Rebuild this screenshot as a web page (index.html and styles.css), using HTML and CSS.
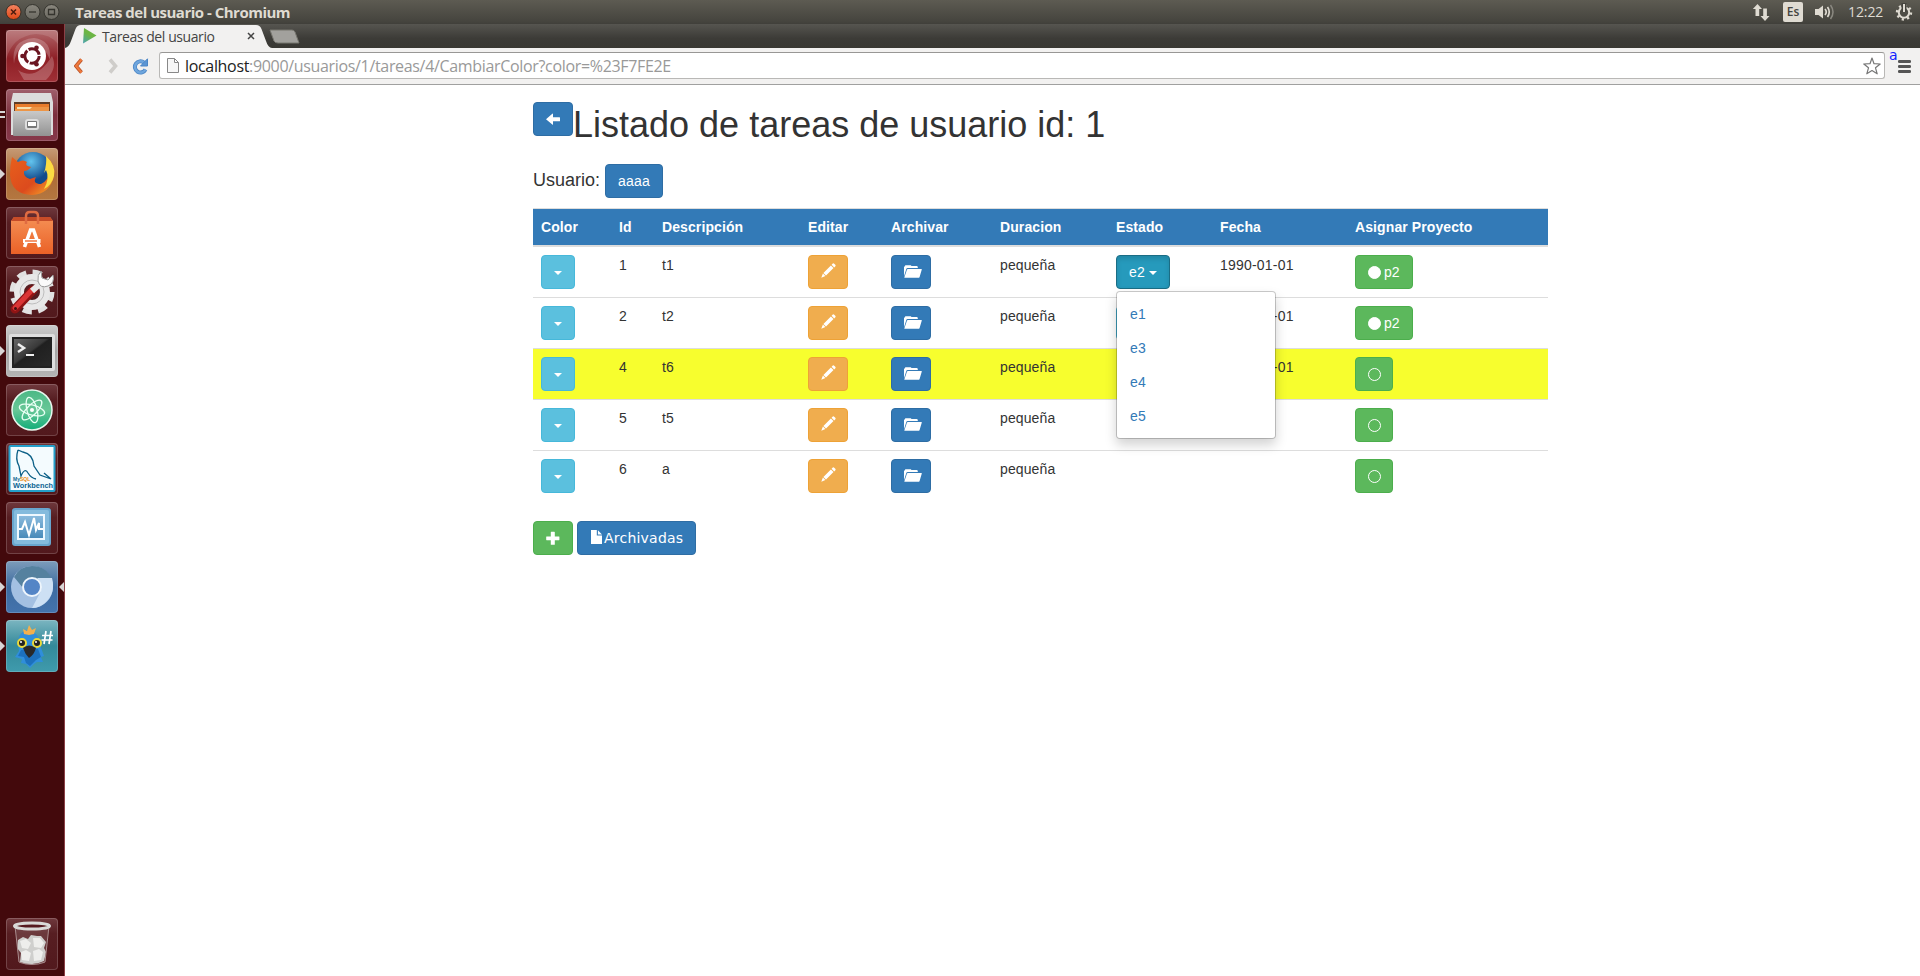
FILE: index.html
```
<!DOCTYPE html>
<html lang="es">
<head>
<meta charset="utf-8">
<title>Tareas del usuario</title>
<link rel="stylesheet" href="styles.css">
</head>
<body>
<svg width="0" height="0" class="defs" aria-hidden="true">
  <defs>
    <symbol id="pencil" viewBox="0 0 15 15"><path fill="#fff" d="M10.6 1.8 L13.2 4.4 L14.4 3.2 Q15 2.5 14.3 1.8 L13.2 .7 Q12.4 0 11.8 .6Z M9.9 2.5 L12.5 5.1 L5 12.6 L2.4 10Z M1.9 10.6 L4.4 13.1 L.3 14.7Z"/></symbol>
    <symbol id="folder" viewBox="0 0 18 13"><path fill="#fff" d="M0 11.2 V2 L1 1 V.7 Q1 .2 1.6 .2 H6.6 Q7.2 .2 7.4 1 H12.6 Q13.8 1 13.8 2.2 V3 H3.6 Q2.7 3 2.4 3.8Z M3.8 3.9 H17.4 Q18 3.9 17.8 4.6 L15.6 11.9 Q15.2 12.8 14.4 12.8 H.7 Q.2 12.8 .4 12.2 L3 4.6 Q3.2 3.9 3.8 3.9Z"/></symbol>
  </defs>
</svg>

<header class="panel">
  <div class="winbtns">
    <svg width="62" height="18" viewBox="0 0 62 18">
      <defs><linearGradient id="wc" x2="0" y2="1"><stop stop-color="#f58461"/><stop offset="1" stop-color="#dd4715"/></linearGradient><linearGradient id="wg" x2="0" y2="1"><stop stop-color="#8a877e"/><stop offset="1" stop-color="#6b6961"/></linearGradient></defs>
      <circle cx="8.5" cy="9" r="7.5" fill="url(#wc)" stroke="#3a3027"/><path d="M6 6.500 L11 11.500 M11 6.500 L6 11.500" stroke="#4b1c0e" stroke-width="1.500"/>
      <circle cx="27.500" cy="9" r="7.500" fill="url(#wg)" stroke="#35342e"/><path d="M24 9 H31" stroke="#35342e" stroke-width="1.300"/>
      <circle cx="46.500" cy="9" r="7.500" fill="url(#wg)" stroke="#35342e"/><path d="M43.500 6.500 H49.500 V11.500 H43.500Z" fill="none" stroke="#35342e" stroke-width="1.300"/>
    </svg>
  </div>
  <div class="wintitle">Tareas del usuario - Chromium</div>
  <div class="tray">
    <svg class="net" width="18" height="17" viewBox="0 0 18 17"><path fill="#dfdbd2" d="M5.500 0 L10 5 H7.200 V12 H3.500 V5 H.8Z M13 17 L8.500 12 H11.200 V4.500 H14.900 V12 H17.500Z"/></svg>
    <span class="kbd">Es</span>
    <svg class="vol" width="20" height="16" viewBox="0 0 20 16"><path fill="#dfdbd2" d="M0 5 H3.500 L8 1.500 V14.500 L3.500 11 H0Z"/><path d="M10 5 Q12.500 8 10 11 M12.500 3 Q16 8 12.500 13" fill="none" stroke="#dfdbd2" stroke-width="1.700"/><path d="M15.500 1 Q20.500 8 15.500 15" fill="none" stroke="#8a8880" stroke-width="1.500"/></svg>
    <span class="clock">12:22</span>
    <svg class="gear" width="18" height="18" viewBox="0 0 18 18"><circle cx="9" cy="9.500" r="7" fill="none" stroke="#dfdbd2" stroke-width="2.400" stroke-dasharray="2.200 3.300"/><circle cx="9" cy="9.500" r="5.200" fill="none" stroke="#dfdbd2" stroke-width="2"/><path d="M9 0 V9" stroke="#45443e" stroke-width="5"/><path d="M9 1 V9" stroke="#dfdbd2" stroke-width="2"/></svg>
  </div>
</header>

<div class="desktop">
  <nav class="launcher">
    <div class="tile dash"><svg viewBox="0 0 52 52"><path d="M0 30 Q6 6 30 4 Q44 4 52 14 V0 H0Z" fill="#fff" opacity=".13"/><path d="M8 34 Q4 10 28 8 Q46 10 44 30 Q38 14 24 12 Q10 16 8 34Z M12 40 Q30 52 46 26 Q52 38 40 50 H18Z" fill="#fff" opacity=".22"/><circle cx="26" cy="26" r="14" fill="#fff"/><circle cx="26" cy="26" r="7.200" fill="none" stroke="#6b1521" stroke-width="3" stroke-dasharray="13.500 1.600"/><circle cx="16.500" cy="26" r="2.300" fill="#6b1521"/><circle cx="30.500" cy="17.800" r="2.300" fill="#6b1521"/><circle cx="30.500" cy="34.200" r="2.300" fill="#6b1521"/></svg></div>
    <div class="tile files"><svg viewBox="0 0 52 52"><defs><linearGradient id="fg" x2="0" y2="1"><stop stop-color="#c9c9c9"/><stop offset="1" stop-color="#929292"/></linearGradient></defs><path d="M7 4 H45 L47 13 V46 H5 V13Z" fill="#dcdcdc"/><rect x="8" y="13" width="36" height="10" fill="#5f3d28"/><path d="M9 15 H43 V23 H9Z" fill="#e87c2c"/><path d="M11 18 H41 V23 H11Z" fill="#f5e0b0"/><path d="M9 20 H24 L26 18 H43 V23 H9Z" fill="#ed9546"/><rect x="7" y="22" width="38" height="25" rx="1" fill="url(#fg)"/><rect x="20" y="31" width="12" height="9" rx="2" fill="#777" stroke="#ddd" stroke-width="2"/><rect x="22" y="33" width="8" height="4" fill="#fff"/></svg><i class="pip two"></i></div>
    <div class="tile fox"><svg viewBox="0 0 52 52"><defs><radialGradient id="bl" cx=".45" cy=".25"><stop stop-color="#63c4ee"/><stop offset="1" stop-color="#124a8c"/></radialGradient><linearGradient id="or" x2="1" y2="1"><stop stop-color="#e8601c"/><stop offset=".6" stop-color="#dc4b1d"/><stop offset="1" stop-color="#f9b12c"/></linearGradient></defs><circle cx="27" cy="23" r="19" fill="url(#bl)"/><path d="M6 9 L12 14 Q17 11 21 14 Q18 18 25 19 Q22 23 18 23 Q17 29 24 31 L30 29 Q26 36 35 36 Q42 33 44 23 Q45 14 40 8 Q50 17 48 28 Q44 46 26 47 Q5 46 4 27 Q4 17 6 9Z" fill="url(#or)"/><path d="M40 8 Q50 17 48 28 Q46 37 38 41 Q44 30 40 22 L38 25 Q41 16 40 8Z" fill="#fbdc43"/></svg><i class="pip"></i></div>
    <div class="tile dim"><svg viewBox="0 0 52 52"><defs><linearGradient id="bag" x2="0" y2="1"><stop stop-color="#f59055"/><stop offset="1" stop-color="#ea6127"/></linearGradient></defs><path d="M5 14 L8 10 H44 L47 14 V47 H5Z" fill="url(#bag)"/><path d="M5 14 L8 10 H44 L47 14Z" fill="#c64c28"/><path d="M20 17 V9 Q20 5 24 5 H28 Q32 5 32 9 V17" fill="none" stroke="#df6b42" stroke-width="2.500"/><path d="M18.500 40 L24.500 23 H27.500 L33.500 40" fill="none" stroke="#fff" stroke-width="3.500"/><path d="M17 34 H34.500" stroke="#fff" stroke-width="4"/><path d="M19 34 H31" stroke="#ef6e35" stroke-width="1.400"/></svg></div>
    <div class="tile dim"><svg viewBox="0 0 52 52"><circle cx="26" cy="26" r="19.500" fill="none" stroke="#e1e1e1" stroke-width="6" stroke-dasharray="9 6.315"/><circle cx="26" cy="26" r="13" fill="none" stroke="#e8e8e8" stroke-width="10"/><circle cx="26" cy="26" r="12" fill="none" stroke="#bebebe"/><path d="M9 43 L27 24" stroke="#8f1414" stroke-width="9" stroke-linecap="round"/><path d="M9 42 L26 24" stroke="#da3535" stroke-width="5" stroke-linecap="round"/><path d="M26 25 L36 16" stroke="#e7e7e7" stroke-width="6"/><path d="M35 5 L36 12 L42 14 L47 9 Q49 17 42 20 Q34 23 32 15 Q31 9 35 5Z" fill="#fafafa" stroke="#999"/><circle cx="9.500" cy="42.500" r="1.500" fill="#401010"/></svg></div>
    <div class="tile term"><svg viewBox="0 0 52 52"><defs><linearGradient id="tm" x2="1" y2="1"><stop stop-color="#666"/><stop offset=".45" stop-color="#393939"/><stop offset=".5" stop-color="#202020"/><stop offset="1" stop-color="#292929"/></linearGradient></defs><rect x="3" y="9" width="46" height="37" rx="2" fill="#dedede"/><rect x="6" y="12" width="40" height="31" fill="#222"/><rect x="8" y="14" width="36" height="27" fill="url(#tm)"/><path d="M12 19 L18 23 L12 27" fill="none" stroke="#eee" stroke-width="2.500"/><path d="M20 30 H28" stroke="#eee" stroke-width="2"/></svg><i class="pip"></i></div>
    <div class="tile dim"><svg viewBox="0 0 52 52"><defs><linearGradient id="at" x2="0" y2="1"><stop stop-color="#4bb885"/><stop offset=".5" stop-color="#68c797"/><stop offset="1" stop-color="#10ad78"/></linearGradient></defs><circle cx="26" cy="26" r="20" fill="url(#at)" stroke="#e8f8ef" stroke-width="1.500"/><g fill="none" stroke="#e8fff4" stroke-width="1.300"><ellipse cx="26" cy="26" rx="13" ry="5" transform="rotate(15 26 26)"/><ellipse cx="26" cy="26" rx="13" ry="5" transform="rotate(75 26 26)"/><ellipse cx="26" cy="26" rx="13" ry="5" transform="rotate(135 26 26)"/></g><circle cx="26" cy="26" r="2" fill="#fff"/></svg></div>
    <div class="tile dim"><svg viewBox="0 0 52 52"><rect x="3.500" y="3" width="45" height="45" rx="1" fill="#f4fbfe" stroke="#249fca" stroke-width="2"/><path d="M12 7 L17 9 Q27 11 28 23 L34 32 L45 36 M45 36 L38 30 M12 7 Q9 16 13 23 L15 33 Q19 24 22 30 Q25 35 30 36" fill="none" stroke="#0b5f86" stroke-width="1.300"/><text x="7" y="38" class="mysql"><tspan fill="#0a6a92">My</tspan><tspan fill="#eb8b12">SQL</tspan></text><text x="7" y="45" textLength="40" lengthAdjust="spacingAndGlyphs" class="wb">Workbench</text></svg></div>
    <div class="tile dim"><svg viewBox="0 0 52 52"><defs><linearGradient id="mn" x2="0" y2="1"><stop stop-color="#8dbddf"/><stop offset="1" stop-color="#4688b7"/></linearGradient></defs><rect x="6" y="6" width="39" height="38" rx="3" fill="#68a6ce"/><rect x="8" y="8" width="35" height="34" rx="2" fill="#84bbdd"/><rect x="12" y="13" width="26" height="24" fill="url(#mn)" stroke="#eef8ff" stroke-width="2"/><path d="M13 27 H16 L19 20 L23 33 L28 16 L30 28 L33 21 V27 H37" fill="none" stroke="#fff" stroke-width="2"/></svg></div>
    <div class="tile chromium"><svg viewBox="0 0 52 52"><circle cx="26" cy="26" r="21" fill="#a4c0e2"/><path d="M26 5 Q40 5 46 18 H26 Q18 18 17 27 L8 16 Q14 5 26 5Z" fill="#55819f"/><path d="M46 17 Q50 32 39 42 Q33 47 26 47 L35 30 Q37 23 31 17Z" fill="#cde0f4"/><circle cx="26" cy="26" r="9" fill="#5485c6" stroke="#eef5fc" stroke-width="2"/></svg><i class="pip"></i><i class="pip right"></i></div>
    <div class="tile bird"><svg viewBox="0 0 52 52"><path d="M23 10 Q34 13 34 25 L38 36 L35 37 L37 42 L31 42 L28 44 L24 48 L20 44 L15 43 L16 39 L9 37 L13 31 Q9 11 23 10Z" fill="#2f8edb"/><path d="M15 30 L12 36 L18 37 L20 43 L24 46 L30 40 L35 37 L32 29Z" fill="#1c70bd"/><path d="M18 14 L17 9 L21 11 L23 5 L26 10 L30 8 L28 14 L23 15Z" fill="#f2b04e"/><circle cx="16" cy="23" r="4" fill="#222" stroke="#ead93a" stroke-width="2"/><circle cx="31" cy="23" r="4" fill="#222" stroke="#ead93a" stroke-width="2"/><circle cx="15" cy="22" r="1" fill="#fff"/><circle cx="30" cy="22" r="1" fill="#fff"/><path d="M17 28 Q23 23 30 28 Q28 35 23 38 Q19 34 17 28Z" fill="#292929"/><path d="M40 11 L38 24 M45 11 L43 24 M36 15.500 H47 M35.500 20 H46.500" stroke="#fff" stroke-width="1.700"/></svg><i class="pip"></i></div>
    <div class="tile dim trash"><svg viewBox="0 0 52 52"><path d="M9 8 H43 L39 45 Q26 49 13 45Z" fill="#fff" opacity=".12"/><path d="M12 22 L17 19 L22 21 L25 17 L31 18 L35 18 L40 24 L38 30 L40 34 L38 43 Q26 49 14 44 L15 35 L11 30Z" fill="#cfcfcd"/><path d="M14 23 L20 21 L25 25 L22 31 L16 30Z M27 20 L34 20 L38 25 L35 30 L28 29Z M15 34 L20 32 L25 35 L23 43 L16 42Z M27 33 L33 31 L37 34 L35 42 L28 43Z" fill="#eeeeec"/><path d="M9 8 L13 44 Q26 49 39 44 L43 8" fill="none" stroke="#a98d8e"/><ellipse cx="26" cy="8" rx="17.500" ry="3" fill="#55191f" stroke="#d9d9d7" stroke-width="3"/></svg></div>
  </nav>

  <section class="browser">
    <div class="tabs">
      <svg class="tabshape" width="210" height="24" viewBox="0 0 210 24"><path d="M0 24 Q4 23 6 17 L10.500 5 Q12 1 16 1 H191 Q195 1 196.500 5 L201 17 Q203 23.500 207 24Z" fill="#f2f1f0"/></svg>
      <div class="tab">
        <svg width="14" height="16" viewBox="0 0 14 16"><defs><linearGradient id="pl" x1="0" y1="1" x2=".6" y2="0"><stop stop-color="#4aa3b5"/><stop offset=".6" stop-color="#6cb544"/></linearGradient></defs><path d="M1 0 L13.500 7.500 L0 15.500Z" fill="url(#pl)"/></svg>
        <span class="tabtitle">Tareas del usuario</span>
        <svg class="tabx" width="8" height="8" viewBox="0 0 8 8"><path d="M1 1 L7 7 M7 1 L1 7" stroke="#444" stroke-width="1.500"/></svg>
      </div>
      <svg class="newtab" width="31" height="15" viewBox="0 0 31 15"><path d="M1 1 H23 Q25 1 26 3 L30 14 H9 Q6 14 5 12Z" fill="#a2a19d" stroke="#77766f"/></svg>
    </div>
    <div class="toolbar">
      <svg class="back" width="10" height="16" viewBox="0 0 10 16"><path d="M7.500 1.500 L2 8 L7.500 14.500" fill="none" stroke="#b8532a" stroke-width="3.600"/><path d="M7.500 1.500 L2 8 L7.500 14.500" fill="none" stroke="#f07a3c" stroke-width="2"/></svg>
      <svg class="fwd" width="10" height="16" viewBox="0 0 10 16"><path d="M2 1.500 L7.500 8 L2 14.500" fill="none" stroke="#cfcdca" stroke-width="3.600"/></svg>
      <svg class="reload" width="17" height="17" viewBox="0 0 17 17"><path d="M12 4.500 A5.600 5.600 0 1 0 13.500 11.500" fill="none" stroke="#4c86c6" stroke-width="4"/><path d="M12 4.500 A5.600 5.600 0 1 0 13.500 11.500" fill="none" stroke="#6fa6dd" stroke-width="2.400"/><path d="M15.500 .8 V8 H8.500Z" fill="#5c96d4" stroke="#4c86c6"/></svg>
      <div class="omnibox">
        <svg class="page-ico" width="12" height="15" viewBox="0 0 12 15"><path d="M.5 .5 H7.500 L11.500 4.500 V14.500 H.5Z M7.500 .5 V4.500 H11.500" fill="#f7f7f7" stroke="#888"/></svg>
        <span class="url"><b>localhost</b>:9000/usuarios/1/tareas/4/CambiarColor?color=%23F7FE2E</span>
        <svg class="star" width="18" height="18" viewBox="0 0 18 18"><path d="M9 1 L11 6.700 L17.200 7 L12.500 10.800 L14.200 16.800 L9 13.500 L3.800 16.800 L5.500 10.800 L.8 7 L7 6.700Z" fill="#fff" stroke="#777" stroke-width="1.200" stroke-linejoin="round"/></svg>
      </div>
      <svg class="menu-ico" width="13" height="13" viewBox="0 0 13 13"><path d="M1.300 1.500 H11.700 M1.300 6.500 H11.700 M1.300 11.500 H11.700" stroke="#555" stroke-width="2.800" stroke-linecap="round"/></svg>
      <span class="stray">a</span>
    </div>

    <main class="container">
      <div class="heading">
        <button class="btn primary"><svg class="arrow" width="14" height="14" viewBox="0 0 14 14"><path fill="#fff" d="M0 7.200 L6.300 1.800 Q7 1.300 7 2.200 V5.200 H13.500 Q14 5.200 14 5.700 V8.700 Q14 9.200 13.500 9.200 H7 V12.200 Q7 13.100 6.300 12.500Z"/></svg></button>
        <h1>Listado de tareas de usuario id: 1</h1>
      </div>
      <div class="user"><h4>Usuario:</h4><button class="btn primary name">aaaa</button></div>
      <table class="table">
        <colgroup><col class="c1"><col class="c2"><col class="c3"><col class="c4"><col class="c5"><col class="c6"><col class="c7"><col class="c8"><col class="c9"></colgroup>
        <thead><tr><th>Color</th><th>Id</th><th>Descripción</th><th>Editar</th><th>Archivar</th><th>Duracion</th><th>Estado</th><th>Fecha</th><th>Asignar Proyecto</th></tr></thead>
        <tbody>
          <tr><td><button class="btn info"><i class="caret"></i></button></td><td>1</td><td>t1</td><td><button class="btn warning"><svg class="pen"><use href="#pencil"/></svg></button></td><td><button class="btn primary"><svg class="fold"><use href="#folder"/></svg></button></td><td class="dur">pequeña</td>
            <td><div class="dropdown"><button class="btn info state active">e2 <i class="caret"></i></button><ul class="menu"><li>e1</li><li>e3</li><li>e4</li><li>e5</li></ul></div></td>
            <td class="date">1990-01-01</td><td><button class="btn success"><i class="dot full"></i>p2</button></td></tr>
          <tr><td><button class="btn info"><i class="caret"></i></button></td><td>2</td><td>t2</td><td><button class="btn warning"><svg class="pen"><use href="#pencil"/></svg></button></td><td><button class="btn primary"><svg class="fold"><use href="#folder"/></svg></button></td><td class="dur">pequeña</td><td><button class="btn info state"><i class="caret"></i></button></td><td class="date">1990-01-01</td><td><button class="btn success"><i class="dot full"></i>p2</button></td></tr>
          <tr class="yellow"><td><button class="btn info"><i class="caret"></i></button></td><td>4</td><td>t6</td><td><button class="btn warning"><svg class="pen"><use href="#pencil"/></svg></button></td><td><button class="btn primary"><svg class="fold"><use href="#folder"/></svg></button></td><td class="dur">pequeña</td><td></td><td class="date">1990-01-01</td><td><button class="btn success"><i class="dot"></i></button></td></tr>
          <tr><td><button class="btn info"><i class="caret"></i></button></td><td>5</td><td>t5</td><td><button class="btn warning"><svg class="pen"><use href="#pencil"/></svg></button></td><td><button class="btn primary"><svg class="fold"><use href="#folder"/></svg></button></td><td class="dur">pequeña</td><td></td><td></td><td><button class="btn success"><i class="dot"></i></button></td></tr>
          <tr><td><button class="btn info"><i class="caret"></i></button></td><td>6</td><td>a</td><td><button class="btn warning"><svg class="pen"><use href="#pencil"/></svg></button></td><td><button class="btn primary"><svg class="fold"><use href="#folder"/></svg></button></td><td class="dur">pequeña</td><td></td><td></td><td><button class="btn success"><i class="dot"></i></button></td></tr>
        </tbody>
      </table>
      <div class="actions">
        <button class="btn success"><svg class="plus" width="14" height="14" viewBox="0 0 14 14"><path fill="#fff" d="M5.200 .8 H8.400 Q8.800 .8 8.800 1.200 V5.400 H13 Q13.400 5.400 13.400 5.800 V8.800 Q13.400 9.200 13 9.200 H8.800 V13.400 Q8.800 13.800 8.400 13.800 H5.200 Q4.800 13.800 4.800 13.400 V9.200 H.6 Q.2 9.200 .2 8.800 V5.800 Q.2 5.400 .6 5.400 H4.800 V1.200 Q4.800 .8 5.200 .8Z"/></svg></button>
        <button class="btn primary archived"><svg width="14" height="14" viewBox="0 0 14 14"><path fill="#fff" d="M1 0 H6.800 V5.600 H12 V14 H1Z M7.900 .2 L12 4.500 H7.900Z"/></svg><span>Archivadas</span></button>
      </div>
    </main>
  </section>
</div>
</body>
</html>
```
FILE: styles.css
```
* { box-sizing: border-box; }
body { margin: 0; width: 1920px; height: 976px; overflow: hidden; background: #fff; color: #333; font: 14px/20px "Liberation Sans", sans-serif; display: flex; flex-direction: column; }
svg { display: block; flex: none; }
.defs { display: none; }
i { font-style: normal; display: block; }

.panel { height: 24px; flex: none; display: flex; align-items: center; background: linear-gradient(#5d5b52, #45443e 90%, #403f3a); color: #dfdbd2; font-family: "Open Sans", sans-serif; }
.winbtns { width: 75px; padding-left: 5px; margin-top: -1px; }
.wintitle { flex: 1; margin-top: -1px; font-size: 15px; font-weight: 700; letter-spacing: -.5px; white-space: nowrap; }
.tray { display: flex; align-items: center; }
.kbd { width: 20px; height: 20px; margin: 0 12px 0 13px; border-radius: 2px; background: #dfdbd2; color: #45443e; font-size: 12px; font-weight: 600; text-align: center; line-height: 20px; }
.clock { width: 36px; margin: 0 11px 0 13px; font-size: 14px; white-space: nowrap; letter-spacing: -.1px; }
.gear { margin-right: 7px; }

.desktop { flex: 1; display: flex; min-height: 0; }
.launcher { width: 65px; padding: 6px 0 6px 6px; display: flex; flex-direction: column; gap: 7px; background: #43090c; border-right: 1px solid #8c4046; }
.tile { position: relative; width: 52px; height: 52px; flex: none; border-radius: 4px; box-shadow: inset 0 0 0 1px rgba(255,255,255,.18); }
.tile svg { width: 52px; height: 52px; }
.dim { background: linear-gradient(#6f393d, #571e22 30%, #52191d); }
.dash { background: linear-gradient(#b2696c, #8e1f25 55%, #a03036); }
.files { background: linear-gradient(#a0606c, #7d2f3d 50%, #87394b); }
.fox { background: linear-gradient(#c69b76, #ad6b37 50%, #b47740); }
.term { background: linear-gradient(#ccc, #a5a5a5 50%, #b4b4b4); }
.chromium { background: linear-gradient(#7d9cba, #3d6ba0 50%, #4473ad); }
.bird { background: linear-gradient(#7bb5c0, #33899a 50%, #3f9bad); }
.trash { margin-top: auto; }
.mysql { font: bold 5px "Liberation Sans", sans-serif; }
.wb { font: bold 7px "Liberation Sans", sans-serif; fill: #0c6492; }
.pip { position: absolute; left: -6px; top: 21px; border: 5px solid transparent; border-left-color: #d9d5d5; border-right: 0; }
.pip.right { left: auto; right: -6px; border: 5px solid transparent; border-right-color: #d9d5d5; border-left: 0; }
.pip.two { top: 22px; width: 5px; height: 7px; border: solid #d9d5d5; border-width: 2.5px 0; }

.browser { flex: 1; display: flex; flex-direction: column; min-width: 0; }
.tabs { position: relative; height: 24px; flex: none; display: flex; background: linear-gradient(#565550, #3c3b37 60%, #393833); }
.tabshape { position: absolute; left: 0; top: 0; }
.tab { position: relative; width: 204px; padding-left: 18px; display: flex; align-items: center; }
.tabtitle { width: 145px; margin-left: 5px; font: 14px "Open Sans", sans-serif; letter-spacing: -.42px; color: #444; white-space: nowrap; }
.newtab { margin: 5px 0 0; }
.toolbar { position: relative; height: 37px; flex: none; display: flex; align-items: center; padding: 0 0 0 9px; background: #f2f1f0; border-bottom: 1px solid #a0a09f; }
.fwd { margin-left: 24px; }
.reload { margin-left: 14px; }
.omnibox { width: 1726px; height: 27px; margin: -1px 0 0 10px; padding: 0 3px 0 7px; display: flex; align-items: center; background: #fff; border: 1px solid #b9b8b6; border-top-color: #989795; border-radius: 3px; }
.url { flex: 1; margin-left: 6px; font: 16px "Open Sans", sans-serif; letter-spacing: -.33px; color: #999; white-space: nowrap; }
.url b { font-weight: 400; color: #222; }
.menu-ico { margin-left: 13px; }
.stray { position: absolute; left: 1824px; top: -2px; font-family: "DejaVu Sans", sans-serif; font-size: 14px; line-height: 18px; color: #12f; }

.container { width: 1015px; margin: 0 0 0 468px; padding-top: 17px; }
.heading { display: flex; align-items: flex-start; }
h1 { margin: 3px 0 0; font-size: 36px; line-height: 40px; }
h1, h4 { font-weight: 400; }
.user { margin-top: 19px; display: flex; align-items: baseline; gap: 5px; }
h4 { margin: 0; font-size: 18px; line-height: 20px; }
.btn { display: inline-flex; align-items: center; height: 34px; padding: 6px 12px; border: 1px solid; border-radius: 4px; color: #fff; font: 14px/20px "Liberation Sans", sans-serif; white-space: pre; vertical-align: top; }
.primary { background: #337ab7; border-color: #2e6da4; }
.info { background: #5bc0de; border-color: #46b8da; }
.info.active { background: #269abc; border-color: #1b6d85; box-shadow: inset 0 3px 5px rgba(0,0,0,.125); }
.warning { background: #f0ad4e; border-color: #eea236; }
.success { background: #5cb85c; border-color: #4cae4c; }
.name { letter-spacing: .2px; }
.state { width: 54px; letter-spacing: .15px; }
.caret { width: 8px; height: 4px; margin-top: 2px; border: 4px solid transparent; border-top-color: #fff; border-bottom: 0; }
.arrow { margin-top: -1px; }
.plus { margin-top: -1px; }
.pen { width: 15px; height: 15px; margin: -3px -1px 0 0; }
.fold { width: 18px; height: 13px; margin: -2px -4px 0 0; }
.dot { width: 13px; height: 13px; margin-right: -1px; border: 1px solid #fff; border-radius: 50%; }
.dot.full { background: #fff; margin-right: 3px; }

.table { width: 1015px; margin-top: 10px; table-layout: fixed; border-spacing: 0; border-top: 1px solid #ddd; }
.c1 { width: 78px; } .c2 { width: 43px; } .c3 { width: 146px; } .c4 { width: 83px; } .c5 { width: 109px; } .c6 { width: 116px; } .c7 { width: 104px; } .c8 { width: 135px; } .c9 { width: 201px; }
th { padding: 8px; text-align: left; color: #fff; background: #337ab7; border-bottom: 2px solid #ddd; letter-spacing: .1px; }
td { height: 51px; padding: 8px; vertical-align: top; border-top: 1px solid #ddd; }
tbody tr:first-child td { height: 50px; border-top: 0; }
.date { letter-spacing: .2px; }
.dur { letter-spacing: .12px; }
.yellow { background: #f7fe2e; }
.dropdown { position: relative; height: 34px; }
.menu { position: absolute; z-index: 2; left: 0; top: 36px; width: 160px; margin: 0; padding: 5px 0; list-style: none; background: #fff; background-clip: padding-box; border: 1px solid rgba(0,0,0,.2); border-radius: 4px; box-shadow: 0 6px 12px rgba(0,0,0,.175); }
.menu li { padding: 7px 13px; color: #337ab7; letter-spacing: .15px; }
.actions { display: flex; gap: 4px; margin-top: 20px; }
.archived svg { margin-top: -2px; }
.archived span { font-family: "DejaVu Sans", sans-serif; letter-spacing: .22px; }
```
